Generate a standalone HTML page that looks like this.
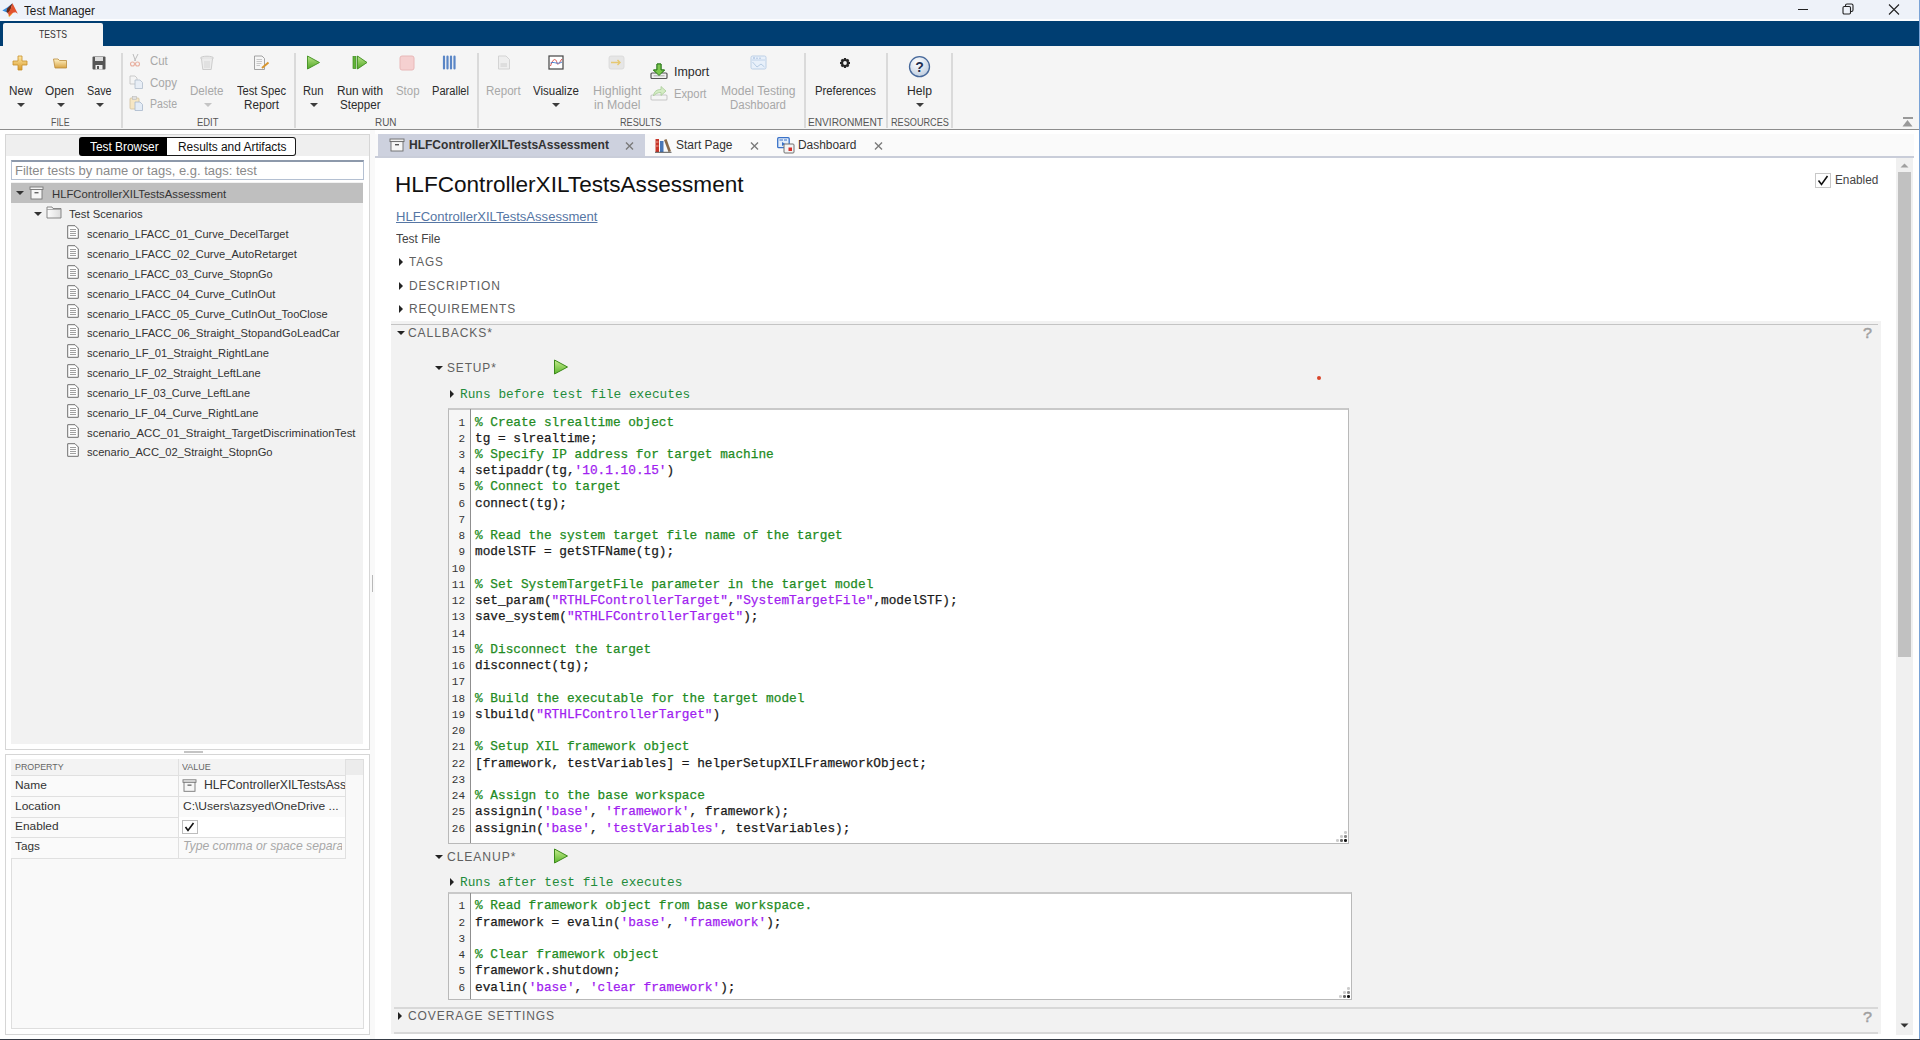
<!DOCTYPE html><html><head><meta charset="utf-8"><style>
*{box-sizing:border-box;margin:0;padding:0}
html,body{width:1920px;height:1040px;overflow:hidden;background:#fff;font-family:"Liberation Sans",sans-serif;color:#333}
.a{position:absolute}
.t{position:absolute;white-space:pre;line-height:1;transform-origin:0 50%}
.dd{position:absolute;width:0;height:0;border-left:4px solid transparent;border-right:4px solid transparent;border-top:4px solid #3c3c3c}
.cl{position:absolute;white-space:pre;font-family:"Liberation Mono",monospace;font-size:12.78px;line-height:16px;color:#1a1a1a;-webkit-text-stroke:0.25px currentColor}
.ln{position:absolute;white-space:pre;font-family:"Liberation Mono",monospace;font-size:11px;line-height:16px;color:#333;text-align:right;width:20px}
.cm{color:#228b22}
.st{color:#a020f0}
.tri-r{position:absolute;width:0;height:0;border-top:4px solid transparent;border-bottom:4px solid transparent;border-left:4px solid #222}
.tri-d{position:absolute;width:0;height:0;border-left:4px solid transparent;border-right:4px solid transparent;border-top:4px solid #222}
#t1{transform:scaleX(0.9766)}
#t2{transform:scaleX(0.7898)}
#t3{transform:scaleX(0.9785)}
#t4{transform:scaleX(0.9878)}
#t5{transform:scaleX(0.8955)}
#t6{transform:scaleX(0.8805)}
#t7{transform:scaleX(0.9525)}
#t8{transform:scaleX(0.9637)}
#t9{transform:scaleX(0.8798)}
#t10{transform:scaleX(0.9658)}
#t11{transform:scaleX(0.9297)}
#t12{transform:scaleX(0.9714)}
#t13{transform:scaleX(0.9438)}
#t14{transform:scaleX(0.9312)}
#t15{transform:scaleX(0.9853)}
#t16{transform:scaleX(0.9636)}
#t17{transform:scaleX(0.9519)}
#t18{transform:scaleX(0.9243)}
#t19{transform:scaleX(0.9921)}
#t20{transform:scaleX(0.9603)}
#t21{transform:scaleX(0.9579)}
#t22{transform:scaleX(1.0363)}
#t23{transform:scaleX(1.0251)}
#t24{transform:scaleX(1.0348)}
#t25{transform:scaleX(0.9369)}
#t26{transform:scaleX(1.0091)}
#t27{transform:scaleX(0.9537)}
#t28{transform:scaleX(0.9121)}
#t29{transform:scaleX(0.9428)}
#t30{transform:scaleX(1.0148)}
#t31{transform:scaleX(1.0127)}
#t32{transform:scaleX(0.9138)}
#t33{transform:scaleX(0.9905)}
#t34{transform:scaleX(0.9919)}
#t35{transform:scaleX(1.0826)}
#t36{transform:scaleX(0.9910)}
#t37{transform:scaleX(0.9864)}
#t38{transform:scaleX(0.9643)}
#t39{transform:scaleX(0.9749)}
#t40{transform:scaleX(0.9610)}
#t41{transform:scaleX(0.9714)}
#t42{transform:scaleX(0.9718)}
#t43{transform:scaleX(0.9777)}
#t44{transform:scaleX(0.9809)}
#t45{transform:scaleX(0.9761)}
#t46{transform:scaleX(0.9640)}
#t47{transform:scaleX(0.9702)}
#t48{transform:scaleX(1.0002)}
#t49{transform:scaleX(0.9802)}
#t50{transform:scaleX(0.9856)}
#t51{transform:scaleX(0.9945)}
#t52{transform:scaleX(1.0363)}
#t54{transform:scaleX(1.0441)}
#t55{transform:scaleX(1.0450)}
#t56{transform:scaleX(1.0327)}
#t57{transform:scaleX(1.0248)}
#t59{transform:scaleX(1.0015)}
#t60{transform:scaleX(0.9964)}
#t61{transform:scaleX(0.9929)}
#t62{transform:scaleX(0.9830)}
#t63{transform:scaleX(1.0268)}
#t64{transform:scaleX(1.0044)}
#t65{transform:scaleX(0.9936)}
#t66{transform:scaleX(0.9833)}
#t67{transform:scaleX(0.9987)}
#t68{transform:scaleX(0.9964)}
#t69{transform:scaleX(1.0050)}
#t70{transform:scaleX(1.0787)}
#t71{transform:scaleX(0.9924)}
#t72{transform:scaleX(1.0021)}
#t73{transform:scaleX(1.0108)}
#t74{transform:scaleX(1.0006)}
#t75{transform:scaleX(1.0017)}
#t76{transform:scaleX(1.0787)}
</style></head><body>
<div class="a" style="left:0px;top:0px;width:1920px;height:19px;background:#eef2f9"></div>
<div class="a" style="left:0px;top:19px;width:1920px;height:2px;background:#fbfcfe"></div>
<svg class="a" style="left:0px;top:0px" width="20" height="18" viewBox="0 0 20 18"><path d="M2.3 10.5 L7.5 7.2 L12.5 3.3 L9 9.5 L7 12.5 Z" fill="#3b8ede"/><path d="M7.2 8.5 L12.5 3.3 L10.5 10 L8 13.5 L6.5 11.5 Z" fill="#6a2a18"/><path d="M12.5 3.3 L17.8 13.8 L15.5 12.3 L13 12.8 L9.5 16.5 L7.8 13 L10.5 9.5 Z" fill="#e2522e"/><path d="M8 15.5 L9.5 16.5 L12 13.5" stroke="#f0c040" stroke-width="0.8" fill="none"/></svg>
<div id="t1" class="t" style="left:24px;top:5.02px;font-size:12px;color:#1a1a1a;">Test Manager</div>
<div class="a" style="left:1798px;top:9px;width:10px;height:1px;background:#222"></div>
<svg class="a" style="left:1842px;top:3px" width="12" height="12" viewBox="0 0 12 12"><rect x="1" y="3.5" width="7.5" height="7.5" rx="1.2" fill="none" stroke="#222" stroke-width="1.1"/><path d="M3.5 3.5 V2.5 Q3.5 1 5 1 H9.5 Q11 1 11 2.5 V7 Q11 8.5 9.5 8.5 H8.5" fill="none" stroke="#222" stroke-width="1.1"/></svg>
<svg class="a" style="left:1888px;top:4px" width="12" height="11" viewBox="0 0 12 11"><path d="M1 0.5 L11 10.5 M11 0.5 L1 10.5" stroke="#222" stroke-width="1.1"/></svg>
<div class="a" style="left:0px;top:21px;width:1920px;height:25px;background:#003e72"></div>
<div class="a" style="left:3px;top:23px;width:100px;height:24px;background:#f5f5f5;border-radius:2px 2px 0 0"></div>
<div id="t2" class="t" style="left:39px;top:28.9px;font-size:11px;color:#333;">TESTS</div>
<div class="a" style="left:0px;top:46px;width:1920px;height:83px;background:#f5f5f5"></div>
<div class="a" style="left:0px;top:129px;width:1920px;height:1px;background:#8c8c8c"></div>
<div class="a" style="left:121px;top:53px;width:2px;height:75px;background:#dadada"></div>
<div class="a" style="left:294px;top:53px;width:2px;height:75px;background:#dadada"></div>
<div class="a" style="left:477px;top:53px;width:2px;height:75px;background:#dadada"></div>
<div class="a" style="left:804px;top:53px;width:2px;height:75px;background:#dadada"></div>
<div class="a" style="left:886px;top:53px;width:2px;height:75px;background:#dadada"></div>
<div class="a" style="left:951px;top:53px;width:2px;height:75px;background:#dadada"></div>
<svg class="a" style="left:12px;top:55px" width="17" height="16" viewBox="0 0 17 16"><defs><linearGradient id="gp" x1="0" y1="0" x2="0" y2="1"><stop offset="0" stop-color="#ffeaa8"/><stop offset="1" stop-color="#d99a2b"/></linearGradient></defs><path d="M6 1 H10 V6 H15 V10 H10 V15 H6 V10 H1 V6 H6 Z" fill="url(#gp)" stroke="#c8912a" stroke-width="0.8"/></svg>
<svg class="a" style="left:53px;top:57px" width="15" height="12" viewBox="0 0 15 12"><defs><linearGradient id="gf" x1="0" y1="0" x2="0" y2="1"><stop offset="0" stop-color="#fff3c8"/><stop offset="1" stop-color="#d9a444"/></linearGradient></defs><path d="M0.5 2 H5 L6.5 3.5 H13.5 V11 H2 Z" fill="url(#gf)" stroke="#b98a3a" stroke-width="0.8"/></svg>
<svg class="a" style="left:92px;top:56px" width="14" height="14" viewBox="0 0 14 14"><rect x="0.5" y="0.5" width="13" height="13" rx="1" fill="#555"/><rect x="3" y="1" width="8" height="4" fill="#ddd"/><rect x="3.5" y="9" width="7" height="4.5" fill="#eee"/><rect x="5" y="10" width="2" height="3" fill="#555"/></svg>
<div id="t3" class="t" style="left:8.5px;top:84.92px;font-size:12px;color:#2b2b2b;">New</div>
<div id="t4" class="t" style="left:45px;top:84.92px;font-size:12px;color:#2b2b2b;">Open</div>
<div id="t5" class="t" style="left:87px;top:84.92px;font-size:12px;color:#2b2b2b;">Save</div>
<div class="dd" style="left:17px;top:103px;border-top-color:#3c3c3c"></div>
<div class="dd" style="left:57px;top:103px;border-top-color:#3c3c3c"></div>
<div class="dd" style="left:96px;top:103px;border-top-color:#3c3c3c"></div>
<div id="t6" class="t" style="left:51.4px;top:118.18px;font-size:10px;color:#555;">FILE</div>
<svg class="a" style="left:129px;top:53px" width="12" height="14" viewBox="0 0 12 14"><path d="M4 1 L6.5 8 M9 1 L5.5 8" stroke="#bdbdbd" stroke-width="1"/><circle cx="3.5" cy="11" r="2" fill="none" stroke="#e8b0a0" stroke-width="1.1"/><circle cx="8.5" cy="11" r="2" fill="none" stroke="#e8b0a0" stroke-width="1.1"/></svg>
<div id="t7" class="t" style="left:150px;top:55.02px;font-size:12px;color:#a8a8a8;">Cut</div>
<svg class="a" style="left:129px;top:75px" width="15" height="14" viewBox="0 0 15 14"><path d="M1 1 H6 L8 3 V9 H1 Z" fill="#f4f4f4" stroke="#c0c0c0" stroke-width="0.8"/><path d="M6 5 H11 L13.5 7.5 V13.5 H6 Z" fill="#e8eef6" stroke="#b0bccc" stroke-width="0.8"/></svg>
<div id="t8" class="t" style="left:150px;top:76.72px;font-size:12px;color:#a8a8a8;">Copy</div>
<svg class="a" style="left:129px;top:96px" width="14" height="15" viewBox="0 0 14 15"><rect x="1" y="2" width="9" height="11" rx="1" fill="#f6e6c4" stroke="#d0c0a0" stroke-width="0.8"/><rect x="3.5" y="0.5" width="4" height="3" fill="#e0e0e0" stroke="#bbb" stroke-width="0.6"/><path d="M6 6 H11 L13.5 8.5 V14.5 H6 Z" fill="#e4ecf6" stroke="#a8b8cc" stroke-width="0.8"/></svg>
<div id="t9" class="t" style="left:150px;top:98.22px;font-size:12px;color:#a8a8a8;">Paste</div>
<svg class="a" style="left:199px;top:55px" width="16" height="16" viewBox="0 0 16 16"><ellipse cx="8" cy="3" rx="6.5" ry="1.8" fill="#e6e6e6" stroke="#c8c8c8" stroke-width="0.9"/><path d="M2.5 4 L3.8 14.5 H12.2 L13.5 4" fill="#ececec" stroke="#c8c8c8" stroke-width="0.9"/><path d="M6 6 V13 M8 6 V13 M10 6 V13" stroke="#d2d2d2" stroke-width="0.8"/></svg>
<div id="t10" class="t" style="left:189.5px;top:84.92px;font-size:12px;color:#a8a8a8;">Delete</div>
<div class="dd" style="left:204px;top:103px;border-top-color:#c4c4c4"></div>
<svg class="a" style="left:253px;top:55px" width="17" height="16" viewBox="0 0 17 16"><path d="M1.5 1 H9 L11.5 3.5 V14.5 H1.5 Z" fill="#f6f6f6" stroke="#9a9a9a" stroke-width="0.9"/><path d="M3.5 4.5 H9 M3.5 6.5 H9 M3.5 8.5 H8.5 M3.5 10.5 H7" stroke="#b4b4b4" stroke-width="0.7"/><path d="M9 13 L15.5 7.5" stroke="#d8962e" stroke-width="2"/></svg>
<div id="t11" class="t" style="left:237px;top:84.92px;font-size:12px;color:#2b2b2b;">Test Spec</div>
<div id="t12" class="t" style="left:244px;top:99.02px;font-size:12px;color:#2b2b2b;">Report</div>
<div id="t13" class="t" style="left:197px;top:118.18px;font-size:10px;color:#555;">EDIT</div>
<svg class="a" style="left:306px;top:55px" width="15" height="15" viewBox="0 0 15 15"><defs><linearGradient id="gg" x1="0" y1="0" x2="0" y2="1"><stop offset="0" stop-color="#b8e486"/><stop offset="1" stop-color="#52a827"/></linearGradient></defs><path d="M1.5 1 L13.5 7.5 L1.5 14 Z" fill="url(#gg)" stroke="#3e8e1e" stroke-width="0.9"/></svg>
<div id="t14" class="t" style="left:303px;top:84.92px;font-size:12px;color:#2b2b2b;">Run</div>
<div class="dd" style="left:310px;top:103px;border-top-color:#3c3c3c"></div>
<svg class="a" style="left:352px;top:55px" width="16" height="15" viewBox="0 0 16 15"><rect x="1" y="1.5" width="3" height="12" fill="#62b23a" stroke="#3e8e1e" stroke-width="0.7"/><path d="M5.5 1 L15 7.5 L5.5 14 Z" fill="url(#gg)" stroke="#3e8e1e" stroke-width="0.9"/></svg>
<div id="t15" class="t" style="left:337px;top:84.92px;font-size:12px;color:#2b2b2b;">Run with</div>
<div id="t16" class="t" style="left:340px;top:99.02px;font-size:12px;color:#2b2b2b;">Stepper</div>
<svg class="a" style="left:399px;top:55px" width="16" height="16" viewBox="0 0 16 16"><rect x="1" y="1" width="14" height="14" rx="2" fill="#f5d0d0" stroke="#e8b8b8" stroke-width="1"/></svg>
<div id="t17" class="t" style="left:395.5px;top:84.92px;font-size:12px;color:#a8a8a8;">Stop</div>
<svg class="a" style="left:442px;top:55px" width="16" height="15" viewBox="0 0 16 15"><path d="M2 1.5 V13.5 M5.5 1.5 V13.5 M9 1.5 V13.5 M12.5 1.5 V13.5" stroke="#5a86c6" stroke-width="2.2" stroke-linecap="round"/></svg>
<div id="t18" class="t" style="left:432px;top:84.92px;font-size:12px;color:#2b2b2b;">Parallel</div>
<div id="t19" class="t" style="left:375px;top:118.18px;font-size:10px;color:#555;">RUN</div>
<svg class="a" style="left:497px;top:55px" width="14" height="15" viewBox="0 0 14 15"><path d="M1.5 1 H9 L12.5 4.5 V14 H1.5 Z" fill="#eee" stroke="#d0d0d0" stroke-width="0.9"/><path d="M3.5 9 H10 M3.5 11 H10" stroke="#c8c8c8" stroke-width="0.9"/></svg>
<div id="t20" class="t" style="left:486px;top:84.92px;font-size:12px;color:#a8a8a8;">Report</div>
<svg class="a" style="left:548px;top:55px" width="16" height="15" viewBox="0 0 16 15"><rect x="1" y="1" width="14" height="13" fill="#fff" stroke="#444" stroke-width="1.2"/><path d="M2.5 11 C5 3 8 3 9 8 C10 12 12 6 14 4" fill="none" stroke="#d9534f" stroke-width="1"/><path d="M2.5 8 C6 6 9 10 14 7" fill="none" stroke="#4a7fd0" stroke-width="1"/></svg>
<div id="t21" class="t" style="left:533px;top:84.92px;font-size:12px;color:#2b2b2b;">Visualize</div>
<div class="dd" style="left:552px;top:103px;border-top-color:#3c3c3c"></div>
<svg class="a" style="left:608px;top:55px" width="17" height="15" viewBox="0 0 17 15"><rect x="1" y="1" width="15" height="13" rx="2" fill="#e6e6e6" stroke="#d8d8d8" stroke-width="0.8"/><path d="M3 7.5 H12 M9.5 5 L12 7.5 L9.5 10" stroke="#e6c870" stroke-width="1.4" fill="none"/></svg>
<div id="t22" class="t" style="left:592.6px;top:84.92px;font-size:12px;color:#a8a8a8;">Highlight</div>
<div id="t23" class="t" style="left:593.5px;top:99.02px;font-size:12px;color:#a8a8a8;">in Model</div>
<svg class="a" style="left:650px;top:63px" width="18" height="17" viewBox="0 0 18 17"><path d="M7 1 H11 V7 H14.5 L9 12.5 L3.5 7 H7 Z" fill="#7cc84e" stroke="#2e7d1e" stroke-width="1"/><rect x="1" y="10" width="16" height="5.5" rx="1" fill="#f0f0f0" stroke="#555" stroke-width="1.2"/><path d="M3.5 12.8 H14.5" stroke="#aaa" stroke-width="1"/><path d="M7 1 H11 V7 H14.5 L9 12.5 L3.5 7 H7 Z" fill="#7cc84e" stroke="#2e7d1e" stroke-width="1"/></svg>
<div id="t24" class="t" style="left:673.8px;top:66.02px;font-size:12px;color:#2b2b2b;">Import</div>
<svg class="a" style="left:650px;top:85px" width="18" height="16" viewBox="0 0 18 16"><rect x="1" y="10" width="16" height="5" rx="1" fill="none" stroke="#c8c8c8" stroke-width="1.1"/><path d="M3.5 11 C4 6 7 4.5 11 4.5 V1.5 L16 6 L11 10.5 V7.5 C8 7.5 5.5 8.5 3.5 11 Z" fill="#d4ecc4" stroke="#a8cc98" stroke-width="0.8"/></svg>
<div id="t25" class="t" style="left:674px;top:87.72px;font-size:12px;color:#a8a8a8;">Export</div>
<svg class="a" style="left:750px;top:55px" width="17" height="15" viewBox="0 0 17 15"><rect x="1" y="1" width="15" height="13" rx="1.5" fill="#e8f0fa" stroke="#b8cce4" stroke-width="0.9"/><path d="M2 5 H15" stroke="#b8cce4" stroke-width="0.8"/><path d="M3 3 H5 M7 2.5 V4 M10 2.5 V4" stroke="#9ab4d8" stroke-width="1"/><path d="M2.5 7 L7 12 L11 9 L14.5 12" fill="none" stroke="#b0c6e0" stroke-width="0.9"/></svg>
<div id="t26" class="t" style="left:721px;top:84.92px;font-size:12px;color:#a8a8a8;">Model Testing</div>
<div id="t27" class="t" style="left:730px;top:99.02px;font-size:12px;color:#a8a8a8;">Dashboard</div>
<div id="t28" class="t" style="left:620px;top:118.18px;font-size:10px;color:#555;">RESULTS</div>
<svg class="a" style="left:839px;top:56.5px" width="12" height="12" viewBox="0 0 12 12"><g fill="#262626"><circle cx="6" cy="6" r="4"/><rect x="4.9" y="1" width="2.2" height="10"/><rect x="1" y="4.9" width="10" height="2.2"/><rect x="4.9" y="1" width="2.2" height="10" transform="rotate(45 6 6)"/><rect x="4.9" y="1" width="2.2" height="10" transform="rotate(-45 6 6)"/></g><circle cx="6" cy="6" r="1.9" fill="#f5f5f5"/></svg>
<div id="t29" class="t" style="left:815px;top:84.92px;font-size:12px;color:#2b2b2b;">Preferences</div>
<div id="t30" class="t" style="left:808px;top:118.18px;font-size:10px;color:#555;">ENVIRONMENT</div>
<svg class="a" style="left:907px;top:55px" width="25" height="23" viewBox="0 0 25 23"><defs><radialGradient id="gh" cx="0.4" cy="0.3" r="0.8"><stop offset="0" stop-color="#ffffff"/><stop offset="1" stop-color="#b8c8dc"/></radialGradient></defs><circle cx="12.5" cy="11.7" r="10" fill="url(#gh)" stroke="#46689a" stroke-width="1.3"/><text x="12.5" y="16.8" font-family="Liberation Sans" font-weight="bold" font-size="14" text-anchor="middle" fill="#1e3050">?</text></svg>
<div id="t31" class="t" style="left:907px;top:84.92px;font-size:12px;color:#2b2b2b;">Help</div>
<div class="dd" style="left:916px;top:103px;border-top-color:#3c3c3c"></div>
<div id="t32" class="t" style="left:890.6px;top:118.18px;font-size:10px;color:#555;">RESOURCES</div>
<div class="a" style="left:1903px;top:117px;width:10px;height:1.5px;background:#999"></div>
<svg class="a" style="left:1902px;top:119px" width="11" height="8" viewBox="0 0 11 8"><path d="M0.5 7.5 L5.5 1 L10.5 7.5 Z" fill="#999"/></svg>
<div class="a" style="left:5px;top:134px;width:365px;height:616px;border:1px solid #d6d6d6;background:#fff"></div>
<div class="a" style="left:6px;top:135px;width:363px;height:21px;background:#efefef"></div>
<div class="a" style="left:79px;top:137px;width:89px;height:19px;background:#000;border-radius:3px 0 0 3px"></div>
<div class="a" style="left:167px;top:137px;width:129px;height:19px;background:#fff;border:1.5px solid #1a1a1a;border-left:none;border-radius:0 3px 3px 0"></div>
<div id="t33" class="t" style="left:89.6px;top:140.52px;font-size:12px;color:#fff;">Test Browser</div>
<div id="t34" class="t" style="left:177.5px;top:140.52px;font-size:12px;color:#111;">Results and Artifacts</div>
<div class="a" style="left:11px;top:160px;width:353px;height:20px;background:#fff;border:1px solid #b4c0d2;border-top:2px solid #8d99ab"></div>
<div id="t35" class="t" style="left:15.1px;top:164.52px;font-size:12px;color:#8a8a8a;">Filter tests by name or tags, e.g. tags: test</div>
<div class="a" style="left:11px;top:182px;width:352px;height:562px;background:#f2f2f2"></div>
<div class="a" style="left:11px;top:183px;width:352px;height:19.5px;background:#bfbfbf"></div>
<div class="tri-d" style="left:16px;top:191px;border-top-color:#333"></div>
<svg class="a" style="left:29px;top:186px" width="15" height="14" viewBox="0 0 15 14"><rect x="1" y="1" width="13" height="2.5" fill="#f2f2f2" stroke="#777" stroke-width="0.9"/><rect x="2" y="3.5" width="11" height="9.5" fill="#f6f6f6" stroke="#777" stroke-width="0.9"/><rect x="5.5" y="6" width="4" height="1.4" fill="#666"/></svg>
<div id="t36" class="t" style="left:51.6px;top:189.31px;font-size:11.4px;color:#333;">HLFControllerXILTestsAssessment</div>
<div class="tri-d" style="left:34px;top:212px;border-top-color:#333"></div>
<svg class="a" style="left:46px;top:206px" width="16" height="13" viewBox="0 0 16 13"><defs><linearGradient id="gfo" x1="0" y1="0" x2="1" y2="0"><stop offset="0" stop-color="#fdfdfd"/><stop offset="1" stop-color="#dcdcdc"/></linearGradient></defs><path d="M1 1 H6 L7 2.5 H15 V12 H1 Z" fill="url(#gfo)" stroke="#7a7a7a" stroke-width="0.9"/><path d="M1 3.5 H15" stroke="#9a9a9a" stroke-width="0.8"/></svg>
<div id="t37" class="t" style="left:69px;top:208.51px;font-size:11.4px;color:#333;">Test Scenarios</div>
<svg class="a" style="left:67px;top:225.0px" width="12" height="14" viewBox="0 0 12 14"><path d="M0.7 0.7 H8 L11.3 4 V13.3 H0.7 Z" fill="#fdfdfd" stroke="#6f6f6f" stroke-width="1"/><path d="M3 4.5 H9 M3 6.5 H9 M3 8.5 H9 M3 10.5 H9" stroke="#a0a0a0" stroke-width="1"/></svg>
<div id="t38" class="t" style="left:87px;top:229.11px;font-size:11.4px;color:#333;">scenario_LFACC_01_Curve_DecelTarget</div>
<svg class="a" style="left:67px;top:244.85px" width="12" height="14" viewBox="0 0 12 14"><path d="M0.7 0.7 H8 L11.3 4 V13.3 H0.7 Z" fill="#fdfdfd" stroke="#6f6f6f" stroke-width="1"/><path d="M3 4.5 H9 M3 6.5 H9 M3 8.5 H9 M3 10.5 H9" stroke="#a0a0a0" stroke-width="1"/></svg>
<div id="t39" class="t" style="left:87px;top:248.96px;font-size:11.4px;color:#333;">scenario_LFACC_02_Curve_AutoRetarget</div>
<svg class="a" style="left:67px;top:264.7px" width="12" height="14" viewBox="0 0 12 14"><path d="M0.7 0.7 H8 L11.3 4 V13.3 H0.7 Z" fill="#fdfdfd" stroke="#6f6f6f" stroke-width="1"/><path d="M3 4.5 H9 M3 6.5 H9 M3 8.5 H9 M3 10.5 H9" stroke="#a0a0a0" stroke-width="1"/></svg>
<div id="t40" class="t" style="left:87px;top:268.81px;font-size:11.4px;color:#333;">scenario_LFACC_03_Curve_StopnGo</div>
<svg class="a" style="left:67px;top:284.55px" width="12" height="14" viewBox="0 0 12 14"><path d="M0.7 0.7 H8 L11.3 4 V13.3 H0.7 Z" fill="#fdfdfd" stroke="#6f6f6f" stroke-width="1"/><path d="M3 4.5 H9 M3 6.5 H9 M3 8.5 H9 M3 10.5 H9" stroke="#a0a0a0" stroke-width="1"/></svg>
<div id="t41" class="t" style="left:87px;top:288.66px;font-size:11.4px;color:#333;">scenario_LFACC_04_Curve_CutInOut</div>
<svg class="a" style="left:67px;top:304.4px" width="12" height="14" viewBox="0 0 12 14"><path d="M0.7 0.7 H8 L11.3 4 V13.3 H0.7 Z" fill="#fdfdfd" stroke="#6f6f6f" stroke-width="1"/><path d="M3 4.5 H9 M3 6.5 H9 M3 8.5 H9 M3 10.5 H9" stroke="#a0a0a0" stroke-width="1"/></svg>
<div id="t42" class="t" style="left:87px;top:308.51px;font-size:11.4px;color:#333;">scenario_LFACC_05_Curve_CutInOut_TooClose</div>
<svg class="a" style="left:67px;top:324.25px" width="12" height="14" viewBox="0 0 12 14"><path d="M0.7 0.7 H8 L11.3 4 V13.3 H0.7 Z" fill="#fdfdfd" stroke="#6f6f6f" stroke-width="1"/><path d="M3 4.5 H9 M3 6.5 H9 M3 8.5 H9 M3 10.5 H9" stroke="#a0a0a0" stroke-width="1"/></svg>
<div id="t43" class="t" style="left:87px;top:328.36px;font-size:11.4px;color:#333;">scenario_LFACC_06_Straight_StopandGoLeadCar</div>
<svg class="a" style="left:67px;top:344.1px" width="12" height="14" viewBox="0 0 12 14"><path d="M0.7 0.7 H8 L11.3 4 V13.3 H0.7 Z" fill="#fdfdfd" stroke="#6f6f6f" stroke-width="1"/><path d="M3 4.5 H9 M3 6.5 H9 M3 8.5 H9 M3 10.5 H9" stroke="#a0a0a0" stroke-width="1"/></svg>
<div id="t44" class="t" style="left:87px;top:348.21px;font-size:11.4px;color:#333;">scenario_LF_01_Straight_RightLane</div>
<svg class="a" style="left:67px;top:363.95px" width="12" height="14" viewBox="0 0 12 14"><path d="M0.7 0.7 H8 L11.3 4 V13.3 H0.7 Z" fill="#fdfdfd" stroke="#6f6f6f" stroke-width="1"/><path d="M3 4.5 H9 M3 6.5 H9 M3 8.5 H9 M3 10.5 H9" stroke="#a0a0a0" stroke-width="1"/></svg>
<div id="t45" class="t" style="left:87px;top:368.06px;font-size:11.4px;color:#333;">scenario_LF_02_Straight_LeftLane</div>
<svg class="a" style="left:67px;top:383.8px" width="12" height="14" viewBox="0 0 12 14"><path d="M0.7 0.7 H8 L11.3 4 V13.3 H0.7 Z" fill="#fdfdfd" stroke="#6f6f6f" stroke-width="1"/><path d="M3 4.5 H9 M3 6.5 H9 M3 8.5 H9 M3 10.5 H9" stroke="#a0a0a0" stroke-width="1"/></svg>
<div id="t46" class="t" style="left:87px;top:387.91px;font-size:11.4px;color:#333;">scenario_LF_03_Curve_LeftLane</div>
<svg class="a" style="left:67px;top:403.65px" width="12" height="14" viewBox="0 0 12 14"><path d="M0.7 0.7 H8 L11.3 4 V13.3 H0.7 Z" fill="#fdfdfd" stroke="#6f6f6f" stroke-width="1"/><path d="M3 4.5 H9 M3 6.5 H9 M3 8.5 H9 M3 10.5 H9" stroke="#a0a0a0" stroke-width="1"/></svg>
<div id="t47" class="t" style="left:87px;top:407.76px;font-size:11.4px;color:#333;">scenario_LF_04_Curve_RightLane</div>
<svg class="a" style="left:67px;top:423.5px" width="12" height="14" viewBox="0 0 12 14"><path d="M0.7 0.7 H8 L11.3 4 V13.3 H0.7 Z" fill="#fdfdfd" stroke="#6f6f6f" stroke-width="1"/><path d="M3 4.5 H9 M3 6.5 H9 M3 8.5 H9 M3 10.5 H9" stroke="#a0a0a0" stroke-width="1"/></svg>
<div id="t48" class="t" style="left:87px;top:427.61px;font-size:11.4px;color:#333;">scenario_ACC_01_Straight_TargetDiscriminationTest</div>
<svg class="a" style="left:67px;top:443.35px" width="12" height="14" viewBox="0 0 12 14"><path d="M0.7 0.7 H8 L11.3 4 V13.3 H0.7 Z" fill="#fdfdfd" stroke="#6f6f6f" stroke-width="1"/><path d="M3 4.5 H9 M3 6.5 H9 M3 8.5 H9 M3 10.5 H9" stroke="#a0a0a0" stroke-width="1"/></svg>
<div id="t49" class="t" style="left:87px;top:447.46px;font-size:11.4px;color:#333;">scenario_ACC_02_Straight_StopnGo</div>
<div class="a" style="left:184px;top:751px;width:19px;height:1.5px;background:#c4c4c4"></div>
<div class="a" style="left:5px;top:754px;width:365px;height:281px;border:1px solid #d6d6d6;background:#fff"></div>
<div class="a" style="left:11px;top:759px;width:353px;height:270px;background:#f9f9f9;border:1px solid #dedede"></div>
<div class="a" style="left:11px;top:759px;width:335px;height:99px;background:#fafafa"></div>
<div class="a" style="left:11px;top:759px;width:335px;height:16px;background:#f3f3f3"></div>
<div class="a" style="left:346px;top:760px;width:17px;height:15px;background:#ececec"></div>
<div id="t50" class="t" style="left:15.1px;top:762.96px;font-size:9px;color:#666;">PROPERTY</div>
<div id="t51" class="t" style="left:182px;top:762.96px;font-size:9px;color:#666;">VALUE</div>
<div class="a" style="left:11px;top:775px;width:335px;height:1px;background:#e0e0e0"></div>
<div class="a" style="left:11px;top:796px;width:335px;height:1px;background:#e0e0e0"></div>
<div class="a" style="left:11px;top:816.5px;width:335px;height:1px;background:#e0e0e0"></div>
<div class="a" style="left:11px;top:837px;width:335px;height:1px;background:#e0e0e0"></div>
<div class="a" style="left:11px;top:858px;width:335px;height:1px;background:#e0e0e0"></div>
<div class="a" style="left:178px;top:759px;width:1px;height:99px;background:#e0e0e0"></div>
<div class="a" style="left:345px;top:759px;width:1px;height:99px;background:#e0e0e0"></div>
<div class="a" style="left:179px;top:817px;width:166px;height:20px;background:#fff"></div>
<div id="t52" class="t" style="left:15.1px;top:779.66px;font-size:11.5px;color:#333;">Name</div>
<svg class="a" style="left:182px;top:779px" width="15" height="13" viewBox="0 0 15 13"><rect x="1" y="0.8" width="13" height="2.5" fill="#f2f2f2" stroke="#777" stroke-width="0.9"/><rect x="2" y="3.3" width="11" height="9" fill="#f6f6f6" stroke="#777" stroke-width="0.9"/><rect x="5.5" y="5.5" width="4" height="1.3" fill="#666"/></svg>
<div class="a" style="left:204px;top:775px;width:141px;height:20px;overflow:hidden">
<div id="t53" class="t" style="left:0px;top:4.32px;font-size:12.2px;color:#333;">HLFControllerXILTestsAssessment</div>
</div>
<div id="t54" class="t" style="left:15.1px;top:800.86px;font-size:11.5px;color:#333;">Location</div>
<div id="t55" class="t" style="left:182.7px;top:800.86px;font-size:11.5px;color:#333;">C:\Users\azsyed\OneDrive ...</div>
<div id="t56" class="t" style="left:15.1px;top:820.66px;font-size:11.5px;color:#333;">Enabled</div>
<div class="a" style="left:182px;top:820px;width:15.5px;height:14px;background:#fff;border:1px solid #bdbdbd"></div>
<svg class="a" style="left:184px;top:822px" width="11" height="10" viewBox="0 0 11 10"><path d="M1.5 5 L4 8.5 L9.5 1" fill="none" stroke="#111" stroke-width="1.6"/></svg>
<div id="t57" class="t" style="left:15.1px;top:840.76px;font-size:11.5px;color:#333;">Tags</div>
<div class="a" style="left:183px;top:838px;width:159px;height:20px;overflow:hidden">
<div id="t58" class="t" style="left:0px;top:2.42px;font-size:12.2px;color:#a8a8a8;font-style:italic">Type comma or space separated</div>
</div>
<div class="a" style="left:1919px;top:0px;width:1px;height:1040px;background:#7aa3d6"></div>
<div class="a" style="left:0px;top:1039px;width:1920px;height:1px;background:#353b45"></div>
<div class="a" style="left:370px;top:130px;width:5px;height:909px;background:#f9f9f9"></div>
<div class="a" style="left:372px;top:575px;width:1px;height:17px;background:#b8b8b8"></div>
<div class="a" style="left:375px;top:158px;width:1521px;height:881px;background:#fff"></div>
<div class="a" style="left:375px;top:134px;width:1539px;height:22px;background:#fafafa"></div>
<div class="a" style="left:375px;top:156px;width:1539px;height:2px;background:#c9cdd9"></div>
<div class="a" style="left:378px;top:134px;width:267px;height:22px;background:#cdd1de"></div>
<svg class="a" style="left:389px;top:138px" width="16" height="14" viewBox="0 0 16 14"><rect x="1" y="1" width="14" height="2.6" fill="#eee" stroke="#6a6a6a" stroke-width="0.9"/><rect x="2" y="3.6" width="12" height="9.4" fill="#f6f6f6" stroke="#6a6a6a" stroke-width="0.9"/><rect x="6" y="6" width="4" height="1.4" fill="#555"/></svg>
<div id="t59" class="t" style="left:409px;top:138.92px;font-size:12px;color:#333;font-weight:bold">HLFControllerXILTestsAssessment</div>
<svg class="a" style="left:625px;top:142px" width="9" height="8" viewBox="0 0 9 8"><path d="M1 0.5 L8 7.5 M8 0.5 L1 7.5" stroke="#7a7a7a" stroke-width="1.4"/></svg>
<svg class="a" style="left:655px;top:137px" width="17" height="16" viewBox="0 0 17 16"><rect x="0.5" y="2" width="3.5" height="13" fill="#c8362a"/><path d="M1 5 H3.5 M1 9 H3.5" stroke="#f0c0b0" stroke-width="0.8"/><rect x="5" y="4" width="3.5" height="11" fill="#4a78b8"/><path d="M9 3 L11.5 2 L16 14.2 L13.5 15 Z" fill="#8a6a4a"/><path d="M0 15.3 H16.5" stroke="#444" stroke-width="0.9"/></svg>
<div id="t60" class="t" style="left:675.5px;top:138.92px;font-size:12px;color:#333;">Start Page</div>
<svg class="a" style="left:750px;top:142px" width="9" height="8" viewBox="0 0 9 8"><path d="M1 0.5 L8 7.5 M8 0.5 L1 7.5" stroke="#7a7a7a" stroke-width="1.4"/></svg>
<svg class="a" style="left:777px;top:137px" width="18" height="17" viewBox="0 0 18 17"><rect x="0.7" y="0.7" width="11.5" height="10" rx="1" fill="#e4eefa" stroke="#3a72c8" stroke-width="1.3"/><path d="M2.5 3 H6 M7 3 H10" stroke="#3a72c8" stroke-width="1.2"/><path d="M5 5 L8.5 7 L5 9 Z" fill="#3a72c8"/><rect x="7" y="7" width="10" height="9" rx="1" fill="#f4f4f4" stroke="#707070" stroke-width="1"/><rect x="11.5" y="10.5" width="3.5" height="3.5" fill="#d9302a"/></svg>
<div id="t61" class="t" style="left:797.7px;top:138.92px;font-size:12px;color:#333;">Dashboard</div>
<svg class="a" style="left:874px;top:142px" width="9" height="8" viewBox="0 0 9 8"><path d="M1 0.5 L8 7.5 M8 0.5 L1 7.5" stroke="#7a7a7a" stroke-width="1.4"/></svg>
<div class="a" style="left:1896px;top:158px;width:17px;height:877px;background:#f0f0f0"></div>
<div class="a" style="left:1898px;top:172px;width:13px;height:485px;background:#c1c1c1"></div>
<svg class="a" style="left:1900px;top:163px" width="9" height="5" viewBox="0 0 9 5"><path d="M0.5 4.5 L4.5 0.5 L8.5 4.5 Z" fill="#a0a0a0"/></svg>
<svg class="a" style="left:1900px;top:1023px" width="9" height="5" viewBox="0 0 9 5"><path d="M0.5 0.5 L4.5 4.5 L8.5 0.5 Z" fill="#333"/></svg>
<div class="a" style="left:1815px;top:173px;width:16px;height:15px;background:#fff;border:1px solid #c8c8c8"></div>
<svg class="a" style="left:1817px;top:175px" width="12" height="11" viewBox="0 0 12 11"><path d="M1.5 5.5 L4.5 9.5 L10.5 1" fill="none" stroke="#111" stroke-width="1.6"/></svg>
<div id="t62" class="t" style="left:1834.6px;top:174.22px;font-size:12px;color:#444;">Enabled</div>
<div id="t63" class="t" style="left:395.4px;top:174.2px;font-size:22px;color:#111;">HLFControllerXILTestsAssessment</div>
<div id="t64" class="t" style="left:396.2px;top:209.63px;font-size:13px;color:#5676a4;text-decoration:underline">HLFControllerXILTestsAssessment</div>
<div id="t65" class="t" style="left:396px;top:232.92px;font-size:12px;color:#444;">Test File</div>
<div class="tri-r" style="left:399px;top:258px;border-left-color:#222"></div>
<div id="t66" class="t" style="left:409.2px;top:256.02px;font-size:12px;color:#606060;letter-spacing:0.9px">TAGS</div>
<div class="tri-r" style="left:399px;top:282px;border-left-color:#222"></div>
<div id="t67" class="t" style="left:409.2px;top:279.82px;font-size:12px;color:#606060;letter-spacing:0.9px">DESCRIPTION</div>
<div class="tri-r" style="left:399px;top:305px;border-left-color:#222"></div>
<div id="t68" class="t" style="left:409.2px;top:303.22px;font-size:12px;color:#606060;letter-spacing:0.9px">REQUIREMENTS</div>
<div class="a" style="left:391px;top:321px;width:1490px;height:713px;background:#f2f2f2"></div>
<div class="a" style="left:391px;top:324px;width:1487px;height:1px;background:#c4c4c4"></div>
<div class="tri-d" style="left:397px;top:331px;border-top-color:#222"></div>
<div id="t69" class="t" style="left:408px;top:326.72px;font-size:12px;color:#606060;letter-spacing:0.9px">CALLBACKS*</div>
<div id="t70" class="t" style="left:1862.5px;top:325.47px;font-size:15px;color:#a0a0a0;-webkit-text-stroke:0.45px #a0a0a0">?</div>
<div class="tri-d" style="left:435px;top:366px;border-top-color:#222"></div>
<div id="t71" class="t" style="left:446.7px;top:361.82px;font-size:12px;color:#606060;letter-spacing:0.9px">SETUP*</div>
<svg class="a" style="left:553px;top:359px" width="16" height="16" viewBox="0 0 16 16"><defs><linearGradient id="gpl553359" x1="0" y1="0" x2="0" y2="1"><stop offset="0" stop-color="#c6ec8e"/><stop offset="1" stop-color="#5cb62c"/></linearGradient></defs><path d="M1.5 1 L14.5 8 L1.5 15 Z" fill="url(#gpl553359)" stroke="#3c8a1a" stroke-width="1"/></svg>
<div class="tri-r" style="left:450px;top:390px;border-left-color:#222"></div>
<div id="t72" class="t" style="left:459.7px;top:388.91px;font-size:12.78px;color:#228b3a;font-family:'Liberation Mono',monospace;">Runs before test file executes</div>
<div class="a" style="left:448px;top:408px;width:901px;height:436px;background:#fff;border:1px solid #b9b9b9;border-top:2px solid #c9c9c9"></div>
<div class="a" style="left:449px;top:410px;width:21px;height:433px;background:#f6f6f6"></div>
<div class="a" style="left:470px;top:409px;width:1px;height:434px;background:#8f8f8f"></div>
<div class="ln" style="left:445px;top:414.5px">1</div>
<div class="cl" style="left:475px;top:414.5px"><span class="cm">% Create slrealtime object</span></div>
<div class="ln" style="left:445px;top:430.74px">2</div>
<div class="cl" style="left:475px;top:430.74px">tg = slrealtime;</div>
<div class="ln" style="left:445px;top:446.98px">3</div>
<div class="cl" style="left:475px;top:446.98px"><span class="cm">% Specify IP address for target machine</span></div>
<div class="ln" style="left:445px;top:463.22px">4</div>
<div class="cl" style="left:475px;top:463.22px">setipaddr(tg,<span class="st">'10.1.10.15'</span>)</div>
<div class="ln" style="left:445px;top:479.46px">5</div>
<div class="cl" style="left:475px;top:479.46px"><span class="cm">% Connect to target</span></div>
<div class="ln" style="left:445px;top:495.7px">6</div>
<div class="cl" style="left:475px;top:495.7px">connect(tg);</div>
<div class="ln" style="left:445px;top:511.94px">7</div>
<div class="cl" style="left:475px;top:511.94px"></div>
<div class="ln" style="left:445px;top:528.18px">8</div>
<div class="cl" style="left:475px;top:528.18px"><span class="cm">% Read the system target file name of the target</span></div>
<div class="ln" style="left:445px;top:544.42px">9</div>
<div class="cl" style="left:475px;top:544.42px">modelSTF = getSTFName(tg);</div>
<div class="ln" style="left:445px;top:560.66px">10</div>
<div class="cl" style="left:475px;top:560.66px"></div>
<div class="ln" style="left:445px;top:576.9px">11</div>
<div class="cl" style="left:475px;top:576.9px"><span class="cm">% Set SystemTargetFile parameter in the target model</span></div>
<div class="ln" style="left:445px;top:593.14px">12</div>
<div class="cl" style="left:475px;top:593.14px">set_param(<span class="st">"RTHLFControllerTarget"</span>,<span class="st">"SystemTargetFile"</span>,modelSTF);</div>
<div class="ln" style="left:445px;top:609.38px">13</div>
<div class="cl" style="left:475px;top:609.38px">save_system(<span class="st">"RTHLFControllerTarget"</span>);</div>
<div class="ln" style="left:445px;top:625.62px">14</div>
<div class="cl" style="left:475px;top:625.62px"></div>
<div class="ln" style="left:445px;top:641.86px">15</div>
<div class="cl" style="left:475px;top:641.86px"><span class="cm">% Disconnect the target</span></div>
<div class="ln" style="left:445px;top:658.1px">16</div>
<div class="cl" style="left:475px;top:658.1px">disconnect(tg);</div>
<div class="ln" style="left:445px;top:674.34px">17</div>
<div class="cl" style="left:475px;top:674.34px"></div>
<div class="ln" style="left:445px;top:690.58px">18</div>
<div class="cl" style="left:475px;top:690.58px"><span class="cm">% Build the executable for the target model</span></div>
<div class="ln" style="left:445px;top:706.82px">19</div>
<div class="cl" style="left:475px;top:706.82px">slbuild(<span class="st">"RTHLFControllerTarget"</span>)</div>
<div class="ln" style="left:445px;top:723.06px">20</div>
<div class="cl" style="left:475px;top:723.06px"></div>
<div class="ln" style="left:445px;top:739.3px">21</div>
<div class="cl" style="left:475px;top:739.3px"><span class="cm">% Setup XIL framework object</span></div>
<div class="ln" style="left:445px;top:755.54px">22</div>
<div class="cl" style="left:475px;top:755.54px">[framework, testVariables] = helperSetupXILFrameworkObject;</div>
<div class="ln" style="left:445px;top:771.78px">23</div>
<div class="cl" style="left:475px;top:771.78px"></div>
<div class="ln" style="left:445px;top:788.02px">24</div>
<div class="cl" style="left:475px;top:788.02px"><span class="cm">% Assign to the base workspace</span></div>
<div class="ln" style="left:445px;top:804.26px">25</div>
<div class="cl" style="left:475px;top:804.26px">assignin(<span class="st">'base'</span>, <span class="st">'framework'</span>, framework);</div>
<div class="ln" style="left:445px;top:820.5px">26</div>
<div class="cl" style="left:475px;top:820.5px">assignin(<span class="st">'base'</span>, <span class="st">'testVariables'</span>, testVariables);</div>
<div class="a" style="left:1344px;top:839px;width:2.6px;height:2.6px;background:#111;border-radius:50%"></div>
<div class="a" style="left:1340px;top:839px;width:2.6px;height:2.6px;background:#666;border-radius:50%"></div>
<div class="a" style="left:1344px;top:835px;width:2.6px;height:2.6px;background:#888;border-radius:50%"></div>
<div class="a" style="left:1336px;top:839px;width:2.6px;height:2.6px;background:#ccc;border-radius:50%"></div>
<div class="a" style="left:1344px;top:831px;width:2.6px;height:2.6px;background:#ccc;border-radius:50%"></div>
<div class="a" style="left:1340px;top:835px;width:2.6px;height:2.6px;background:#ccc;border-radius:50%"></div>
<div class="tri-d" style="left:435px;top:855px;border-top-color:#222"></div>
<div id="t73" class="t" style="left:446.7px;top:851.02px;font-size:12px;color:#606060;letter-spacing:0.9px">CLEANUP*</div>
<svg class="a" style="left:553px;top:848px" width="16" height="16" viewBox="0 0 16 16"><defs><linearGradient id="gpl553848" x1="0" y1="0" x2="0" y2="1"><stop offset="0" stop-color="#c6ec8e"/><stop offset="1" stop-color="#5cb62c"/></linearGradient></defs><path d="M1.5 1 L14.5 8 L1.5 15 Z" fill="url(#gpl553848)" stroke="#3c8a1a" stroke-width="1"/></svg>
<div class="tri-r" style="left:450px;top:878px;border-left-color:#222"></div>
<div id="t74" class="t" style="left:459.7px;top:876.61px;font-size:12.78px;color:#228b3a;font-family:'Liberation Mono',monospace;">Runs after test file executes</div>
<div class="a" style="left:448px;top:892px;width:904px;height:108px;background:#fff;border:1px solid #b9b9b9;border-top:2px solid #c9c9c9"></div>
<div class="a" style="left:449px;top:894px;width:21px;height:105px;background:#f6f6f6"></div>
<div class="a" style="left:470px;top:893px;width:1px;height:106px;background:#8f8f8f"></div>
<div class="ln" style="left:445px;top:898.3px">1</div>
<div class="cl" style="left:475px;top:898.3px"><span class="cm">% Read framework object from base workspace.</span></div>
<div class="ln" style="left:445px;top:914.54px">2</div>
<div class="cl" style="left:475px;top:914.54px">framework = evalin(<span class="st">'base'</span>, <span class="st">'framework'</span>);</div>
<div class="ln" style="left:445px;top:930.78px">3</div>
<div class="cl" style="left:475px;top:930.78px"></div>
<div class="ln" style="left:445px;top:947.02px">4</div>
<div class="cl" style="left:475px;top:947.02px"><span class="cm">% Clear framework object</span></div>
<div class="ln" style="left:445px;top:963.26px">5</div>
<div class="cl" style="left:475px;top:963.26px">framework.shutdown;</div>
<div class="ln" style="left:445px;top:979.5px">6</div>
<div class="cl" style="left:475px;top:979.5px">evalin(<span class="st">'base'</span>, <span class="st">'clear framework'</span>);</div>
<div class="a" style="left:1347px;top:995px;width:2.6px;height:2.6px;background:#111;border-radius:50%"></div>
<div class="a" style="left:1343px;top:995px;width:2.6px;height:2.6px;background:#666;border-radius:50%"></div>
<div class="a" style="left:1347px;top:991px;width:2.6px;height:2.6px;background:#888;border-radius:50%"></div>
<div class="a" style="left:1339px;top:995px;width:2.6px;height:2.6px;background:#ccc;border-radius:50%"></div>
<div class="a" style="left:1347px;top:987px;width:2.6px;height:2.6px;background:#ccc;border-radius:50%"></div>
<div class="a" style="left:1343px;top:991px;width:2.6px;height:2.6px;background:#ccc;border-radius:50%"></div>
<div class="a" style="left:394px;top:1007px;width:1484px;height:2px;background:#d8d8d8"></div>
<div class="tri-r" style="left:398px;top:1012px;border-left-color:#222"></div>
<div id="t75" class="t" style="left:408.1px;top:1010.22px;font-size:12px;color:#606060;letter-spacing:0.9px">COVERAGE SETTINGS</div>
<div id="t76" class="t" style="left:1862.5px;top:1009.27px;font-size:15px;color:#a0a0a0;-webkit-text-stroke:0.45px #a0a0a0">?</div>
<div class="a" style="left:394px;top:1032px;width:1484px;height:2px;background:#d8d8d8"></div>
<div class="a" style="left:1317px;top:376px;width:4px;height:4px;background:#d9452a;border-radius:50%"></div>
</body></html>
